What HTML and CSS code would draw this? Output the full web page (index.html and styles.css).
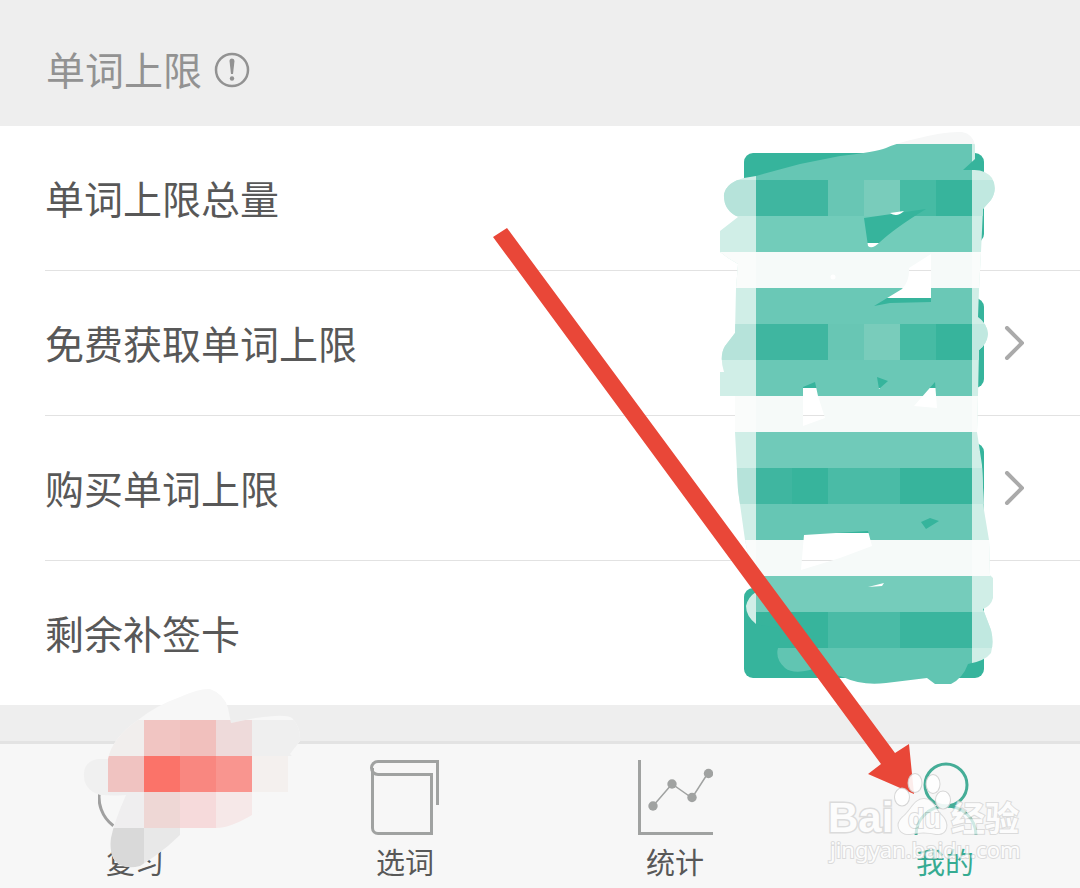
FILE: index.html
```html
<!DOCTYPE html>
<html lang="zh-CN">
<head>
<meta charset="utf-8">
<meta name="viewport" content="width=device-width">
<title>单词上限</title>
<link rel="stylesheet" href="styles.css">
</head>
<body>
<div class="page">
  <header class="section-head">
    <h1 class="section-title">单词上限</h1>
    <button class="info" aria-label="说明">
      <svg width="36" height="36" viewBox="0 0 36 36"><circle cx="18" cy="18" r="16" fill="none" stroke="#929292" stroke-width="2.500"/><path d="M15.500 9a2.500 2.500 0 0 1 5 0L19 22h-2z" fill="#929292"/><circle cx="18" cy="26.500" r="2.200" fill="#929292"/></svg>
    </button>
  </header>

  <main class="list">
    <div class="row"><span class="label">单词上限总量</span><span class="badge"></span></div>
    <a class="row" href="#free"><span class="label">免费获取单词上限</span><span class="badge"></span>
      <svg class="chevron" width="20" height="34" viewBox="0 0 20 34"><path d="M3 2l15 15L3 32" fill="none" stroke="#aaa" stroke-width="4" stroke-linecap="round"/></svg></a>
    <a class="row" href="#buy"><span class="label">购买单词上限</span><span class="badge"></span>
      <svg class="chevron" width="20" height="34" viewBox="0 0 20 34"><path d="M3 2l15 15L3 32" fill="none" stroke="#aaa" stroke-width="4" stroke-linecap="round"/></svg></a>
    <div class="row row-last"><span class="label">剩余补签卡</span><span class="badge"></span></div>

    <svg class="mosaic" width="380" height="579" viewBox="700 126 380 579" aria-hidden="true">
      <clipPath id="brush">
        <path clip-rule="evenodd" d="M744 178L756 176L800 164L840 156Q876 152 886 148Q897 143 915 139Q945 131 962 132Q973 134 975 145V159L963 170H972Q985 169 992 178Q998 189 991 200L983 209L981 252L979 290L978 317Q987 323 988 334Q987 344 979 350L978 396L977 432L982 465L984 510L989 540L990 575L993 578V598Q991 606 983 609L991 630Q994 642 991 653Q985 661 968 664Q963 678 951 684H935L927 678L886 683Q862 686 843 677L813 669Q794 675 785 668Q775 659 778 648L783 629L756 624Q746 616 746 606Q748 597 756 592L745 540L738 490L735 432V396H720V372H724Q719 356 725 346L735 333L736 288L738 264L728 258L720 252V231L738 217Q723 210 724 194Q727 182 744 178Z
        M864 218L926 209Q895 228 880 242Q872 250 868 246Z
        M874 306L902 289Q910 280 909 268L931 254V302L890 303Z
        M877 377L888 381L879 389Z
        M803 387L815 382L818 396L825 418L803 426Z
        M914 406L935 382L937 408Z
        M921 522L930 518L939 521L926 529Z
        M804 535L868 531L872 546L840 558L801 570Z"/>
      </clipPath>
      <g clip-path="url(#brush)" shape-rendering="crispEdges">
        <path fill="#f6f7f7" d="M720 126h288v18H720z"/>
        <path fill="#d0eee7" d="M720 144h36v540h-36zM972 144h36v540h-36z"/>
        <path fill="#b6e3da" d="M720 180h36v36h-36zM720 324h36v36h-36zM720 468h36v36h-36z"/>
        <path fill="#c0e8e0" d="M972 180h36v36h-36zM972 324h36v36h-36zM972 468h36v36h-36zM972 612h36v36h-36z"/>
        <path fill="#66c6b4" d="M756 144h216v36H756z"/>
        <path fill="#72ccba" d="M756 216h216v36H756z"/>
        <path fill="#6ac8b6" d="M756 288h216v36H756zM756 360h216v36H756z"/>
        <path fill="#70cab9" d="M756 432h216v36H756z"/>
        <path fill="#66c6b4" d="M756 504h216v36H756z"/>
        <path fill="#75ccbb" d="M756 576h216v36H756z"/>
        <path fill="#61c5b2" d="M756 648h216v36H756z"/>
        <path fill="#3fb6a0" d="M756 180h72v36h-72zM756 324h72v36h-72zM756 468h36v36h-36z"/>
        <path fill="#68c6b4" d="M828 180h36v36h-36zM828 324h36v36h-36z"/>
        <path fill="#79ccbb" d="M864 180h36v36h-36zM864 324h36v36h-36z"/>
        <path fill="#46bba4" d="M900 180h36v36h-36zM900 324h36v36h-36z"/>
        <path fill="#37b49c" d="M936 180h36v36h-36zM936 324h36v36h-36zM792 468h36v36h-36zM900 468h72v36h-72zM756 612h72v36h-72z"/>
        <path fill="#4abba6" d="M828 468h72v36h-72zM828 612h72v36h-72z"/>
        <path fill="#3ab59e" d="M900 612h72v36h-72z"/>
        <path fill="#f6faf9" d="M756 252h216v36H756zM756 396h216v36H756zM756 540h216v36H756z"/>
        <path fill="#fafcfb" d="M720 252h36v36h-36zM972 252h36v36h-36zM720 396h36v36h-36zM972 396h36v36h-36zM720 540h36v36h-36zM972 540h36v36h-36z"/>
      </g>
      <path fill="#fff" d="M890 213L904 211Q897 218 890 213ZM868 587L884 583L882 586Z"/>
      <circle cx="833" cy="277" r="2.500" fill="#fff"/>
    </svg>
  </main>

  <nav class="tabs">
    <a class="tab" href="#review">
      <svg width="75" height="75" viewBox="0 0 75 75"><circle cx="37" cy="37" r="36" fill="none" stroke="#a0a0a0" stroke-width="3" stroke-dasharray="41 400" transform="rotate(127 37 37)"/></svg>
      <span>复习</span></a>
    <a class="tab" href="#words">
      <svg width="75" height="75" viewBox="0 0 75 75"><path d="M69.500 45V1.500H10a6 6 0 0 0 0 13H63.500V73.500H10a5.500 5.500 0 0 1-5.500-5.500V8" fill="none" stroke="#a0a2a1" stroke-width="3"/></svg>
      <span>选词</span></a>
    <a class="tab" href="#stats">
      <svg width="75" height="75" viewBox="0 0 75 75"><path d="M1.500 0V73.500H75" fill="none" stroke="#a0a2a1" stroke-width="3"/><path d="M15 46L34 24L54 38L70 13" fill="none" stroke="#a0a2a1" stroke-width="1.500"/><g fill="#a0a2a1"><circle cx="15" cy="46" r="4.700"/><circle cx="34" cy="24" r="4.700"/><circle cx="54" cy="37.500" r="4.700"/><circle cx="70.500" cy="13.500" r="4.700"/></g></svg>
      <span>统计</span></a>
    <a class="tab active" href="#mine">
      <svg width="75" height="75" viewBox="0 0 75 75"><circle cx="38" cy="25" r="21" fill="none" stroke="#45ad97" stroke-width="3"/><path d="M8 75a30 29 0 0 1 60 0" fill="none" stroke="#45ad97" stroke-width="3"/></svg>
      <span>我的</span></a>

    <svg class="smudge" width="320" height="200" viewBox="0 680 320 200" aria-hidden="true">
      <clipPath id="smear"><path d="M138 720Q155 706 180 697Q200 688 210 689Q224 694 228 708L231 723L250 719Q285 713 292 718Q301 727 300 741L290 754Q297 761 296 770Q294 788 284 796L252 815Q230 828 216 828Q196 828 180 835Q169 846 155 856L140 866Q124 870 115 861Q109 852 111 838Q114 822 126 795Q100 797 93 792Q83 786 84 773Q85 761 98 759H108Q112 738 138 720Z"/></clipPath>
      <g clip-path="url(#smear)" shape-rendering="crispEdges">
        <path fill="#f7f7f7" d="M72 680h248v200H72z"/>
        <path fill="#f1eeed" d="M72 720h72v36H72z"/><path fill="#f1c5c2" d="M144 720h36v36h-36z"/><path fill="#f1c0bd" d="M180 720h36v36h-36z"/><path fill="#eedada" d="M216 720h36v36h-36z"/><path fill="#efefef" d="M252 720h60v36h-60z"/>
        <path fill="#f0f0f0" d="M72 756h36v40H72z"/><path fill="#f0c3c1" d="M108 756h36v36h-36z"/><path fill="#fb7369" d="M144 756h36v36h-36z"/><path fill="#f98780" d="M180 756h36v36h-36z"/><path fill="#f9958f" d="M216 756h36v36h-36z"/><path fill="#f4f0ee" d="M252 756h36v36h-36z"/>
        <path fill="#efeeef" d="M108 792h36v36h-36z"/><path fill="#eed7d5" d="M144 792h36v36h-36z"/><path fill="#f6dadb" d="M180 792h36v36h-36z"/><path fill="#f6e8e8" d="M216 792h36v36h-36z"/>
        <path fill="#d9d9d9" d="M108 828h36v44h-36z"/><path fill="#e8e8e8" d="M144 828h36v44h-36z"/>
      </g>
    </svg>
  </nav>

  <svg class="arrow" width="600" height="580" viewBox="480 220 600 580" aria-hidden="true"><path fill="#e94738" d="M493 237L507 228L895 753L909 744L914 794L868 774L881 764Z"/></svg>

  <svg class="watermark" width="270" height="128" viewBox="810 760 270 128">
    <g class="toes">
      <ellipse cx="915" cy="783" rx="6.500" ry="9"/><ellipse cx="933" cy="784" rx="6.500" ry="9"/><ellipse cx="902" cy="797" rx="7" ry="8.500"/><ellipse cx="943" cy="800" rx="7" ry="8.500"/>
    </g>
    <g class="mark">
      <path d="M924 799C914 799 911 811 903 817C894 825 900 835 910 834Q924 831 936 834C948 835 949 823 942 816C935 810 934 799 924 799Z"/>
      <text class="mark-brand" x="828" y="832">Bai</text>
      <text class="mark-cjk" x="951" y="831">经验</text>
      <text class="mark-url" x="830" y="858">jingyan.baidu.com</text>
      <text class="mark-du" x="908" y="828">du</text>
    </g>
  </svg>
</div>
</body>
</html>
```
FILE: styles.css
```css
* { box-sizing: border-box; }

body {
  margin: 0;
  background: #f7f7f7;
  font-family: "Noto Sans CJK SC", sans-serif;
  color: #585858;
}

a { color: inherit; text-decoration: none; }

.page {
  position: relative;
  background: #eee;
  overflow: hidden;
}

.section-head {
  display: flex;
  align-items: center;
  gap: 12px;
  height: 126px;
  padding: 13px 46px 0;
}

.section-title {
  margin: 0;
  padding-bottom: 4px;
  font-size: 39px;
  font-weight: 400;
  line-height: 56px;
  color: #929292;
}

.info {
  display: flex;
  padding: 0;
  border: 0;
  background: none;
}

.list {
  position: relative;
  padding-left: 45px;
  background: #fff;
}

.row {
  display: flex;
  align-items: center;
  height: 145px;
  padding-right: 96px;
  border-bottom: 1px solid #e2e2e2;
}

.row-last {
  height: 144px;
  border-bottom: 0;
}

.label {
  flex: 1;
  padding-bottom: 3px;
  font-size: 39px;
  line-height: 56px;
}

.badge {
  width: 240px;
  height: 90px;
  border-radius: 9px;
  background: #36b49c;
}

.chevron {
  margin-left: 20px;
  margin-right: -40px;
}

.mosaic {
  position: absolute;
  top: 0;
  right: 0;
}

.tabs {
  position: relative;
  display: grid;
  grid-template-columns: repeat(4, 1fr);
  margin-top: 36px;
  border-top: 3px solid #e3e3e3;
  background: #f7f7f7;
}

.tab {
  display: flex;
  flex-direction: column;
  align-items: center;
  gap: 6px;
  padding: 16px 0 7px;
  font-size: 29px;
  line-height: 40px;
}

.active { color: #36ab92; }

.smudge {
  position: absolute;
  top: -64px;
  left: 0;
}

.arrow {
  position: absolute;
  top: 220px;
  right: 0;
  pointer-events: none;
}

.watermark {
  position: absolute;
  right: 0;
  bottom: 0;
  pointer-events: none;
}

.toes,
.mark {
  fill: #fff;
  stroke: #d2d2d2;
  stroke-width: 2px;
  paint-order: stroke;
}

.toes { opacity: 0.9; }

.mark { opacity: 0.74; }

.mark-brand {
  font: bold 42px "Liberation Sans", sans-serif;
  stroke-width: 3px;
}

.mark-cjk {
  font: bold 34px "Noto Sans CJK SC", sans-serif;
}

.mark-url {
  font: 22px "Noto Sans", sans-serif;
}

.mark-du {
  font: bold 27px "Liberation Sans", sans-serif;
}
```
